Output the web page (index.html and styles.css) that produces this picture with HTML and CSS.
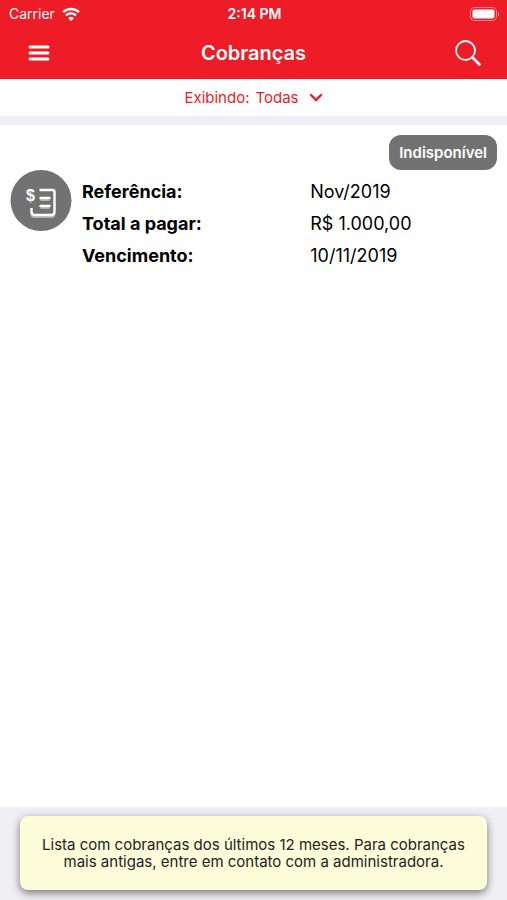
FILE: index.html
```html
<!DOCTYPE html>
<html lang="pt-BR">
  <head>
    <meta charset="utf-8">
    <meta name="viewport" content="width=device-width, initial-scale=1">
    <title>Cobranças</title>
    <link rel="stylesheet" href="styles.css">
  </head>
  <body>
    <header class="header">
      <div class="status-bar">
        <span class="carrier">
          Carrier
          <svg class="wifi" viewBox="0 0 18 14" fill="none" stroke="currentColor" stroke-width="2.4">
            <path d="M1 5.2a11.5 11.5 0 0 1 16 0" />
            <path d="M4 8.4a7.2 7.2 0 0 1 10 0" />
            <path d="M9 14L6.2 11.2a4 4 0 0 1 5.6 0z" fill="currentColor" stroke="none" />
          </svg>
        </span>
        <span class="clock">2:14 PM</span>
        <svg class="battery" viewBox="0 0 30 14">
          <rect x="0.5" y="0.5" width="26" height="13" rx="4" fill="none" stroke="#fff" stroke-opacity="0.45" />
          <rect x="2.5" y="2.5" width="22" height="9" rx="2" fill="#fff" />
          <path d="M28 5v4.5a3 3 0 0 0 0-4.5z" fill="#fff" fill-opacity="0.5" />
        </svg>
      </div>
      <nav class="nav-bar">
        <button class="icon-btn" type="button" aria-label="Menu">
          <svg class="menu-icon" viewBox="0 0 22 16" stroke="currentColor" stroke-width="3" stroke-linecap="round">
            <path d="M2 2h18M2 8h18M2 14h18" />
          </svg>
        </button>
        <h1>Cobranças</h1>
        <button class="icon-btn" type="button" aria-label="Buscar">
          <svg class="search-icon" viewBox="0 0 26 26" fill="none" stroke="currentColor" stroke-linecap="round">
            <circle cx="10.5" cy="10.5" r="9.5" stroke-width="1.8" />
            <path d="M17.5 17.5l7 7" stroke-width="2.6" />
          </svg>
        </button>
      </nav>
    </header>

    <div class="filter">
      <label for="filter-select">Exibindo:</label>
      <select id="filter-select">
        <option>Todas</option>
      </select>
      <svg class="chevron" viewBox="0 0 14 10" fill="none" stroke="currentColor" stroke-width="2.4" stroke-linecap="round">
        <path d="M2 2l5 5 5-5" />
      </svg>
    </div>

    <main class="list">
      <article class="bill">
        <span class="badge">Indisponível</span>
        <div class="bill-body">
          <svg class="bill-icon" viewBox="0 0 61 61">
            <circle cx="30.5" cy="30.5" r="30.5" fill="#727272" />
            <path d="M21 42v2a3 3 0 0 0 3 3h17a3 3 0 0 0 3-3" fill="none" stroke="#b0b0b0" stroke-width="2" />
            <path d="M29 20h13a2 2 0 0 1 2 2v20a3 3 0 0 1-3 3H24a3 3 0 0 1-3-3v-4" fill="none" stroke="#fff" stroke-width="2.4" />
            <path d="M30 30h9M30 38h9" stroke="#b0b0b0" stroke-width="2" />
            <path d="M30 28h9M30 36h9" stroke="#fff" stroke-width="2.4" stroke-linecap="round" />
            <text x="20" y="31" class="bill-icon-sign">$</text>
          </svg>
          <dl class="bill-data">
            <dt>Referência:</dt>
            <dd>Nov/2019</dd>
            <dt>Total a pagar:</dt>
            <dd>R$ 1.000,00</dd>
            <dt>Vencimento:</dt>
            <dd>10/11/2019</dd>
          </dl>
        </div>
      </article>
    </main>

    <footer class="footer">
      <p class="notice">
        Lista com cobranças dos últimos 12 meses. Para cobranças mais antigas,
        entre em contato com a administradora.
      </p>
    </footer>
  </body>
</html>
```
FILE: styles.css
```css
:root {
  --red: #ed1c26;
  --gray: #727272;
  --bg: #efeff4;
  --surface: #fff;
  --notice: #fdfdd9;
}

* {
  box-sizing: border-box;
}

body {
  display: flex;
  flex-direction: column;
  min-height: 100vh;
  margin: 0;
  background: var(--bg);
  color: #000;
  font-family: Inter, "Liberation Sans", sans-serif;
}

svg {
  display: block;
}

/* Header */
.header {
  background: var(--red);
  color: #fff;
}

.status-bar {
  display: grid;
  grid-template-columns: 1fr auto 1fr;
  align-items: center;
  height: 27px;
  padding: 0 7px 0 9px;
  font-size: 14px;
}

.carrier {
  display: flex;
  align-items: center;
  gap: 7px;
}

.wifi {
  width: 18px;
  height: 14px;
}

.clock {
  font-weight: 600;
}

.battery {
  justify-self: end;
  width: 30px;
  height: 14px;
}

.nav-bar {
  display: flex;
  align-items: center;
  justify-content: space-between;
  height: 52px;
  padding: 0 20px;
}

.nav-bar h1 {
  margin: 0;
  font-size: 20px;
  font-weight: 600;
}

.icon-btn {
  display: flex;
  align-items: center;
  justify-content: center;
  width: 38px;
  height: 44px;
  padding: 0;
  border: none;
  background: none;
  color: inherit;
  cursor: pointer;
}

.menu-icon {
  width: 22px;
  height: 16px;
}

.search-icon {
  width: 26px;
  height: 26px;
}

/* Filter */
.filter {
  display: flex;
  align-items: center;
  justify-content: center;
  gap: 6px;
  height: 37px;
  background: var(--surface);
  color: var(--red);
  font-size: 15px;
}

.filter select {
  appearance: none;
  field-sizing: content;
  padding: 0;
  border: none;
  background: none;
  color: inherit;
  font: inherit;
  cursor: pointer;
}

.chevron {
  width: 14px;
  height: 10px;
  margin-left: 4px;
  pointer-events: none;
}

/* Bills */
.list {
  flex: 1;
  margin-top: 9px;
  background: var(--surface);
}

.bill {
  display: flex;
  flex-direction: column;
  padding: 10px;
}

.badge {
  align-self: flex-end;
  padding: 8px 10px;
  border-radius: 12px;
  background: var(--gray);
  color: #fff;
  font-size: 15px;
  font-weight: 600;
  line-height: 19px;
}

.bill-body {
  display: flex;
  align-items: flex-start;
  gap: 10px;
}

.bill-icon {
  flex: none;
  width: 62px;
  height: 61px;
}

.bill-icon-sign {
  fill: #fff;
  font-family: "Liberation Sans", sans-serif;
  font-size: 16px;
  font-weight: 700;
  text-anchor: middle;
}

.bill-data {
  flex: 1;
  display: grid;
  grid-template-columns: 55fr 45fr;
  margin: 6px 0 0;
  font-size: 18px;
  line-height: 32px;
}

.bill-data dt {
  font-weight: 700;
}

.bill-data dd {
  margin: 0;
}

/* Footer */
.footer {
  padding: 9px 20px 10px;
}

.notice {
  margin: 0;
  padding: 20px;
  border-radius: 8px;
  background: var(--notice);
  box-shadow: 0 3px 8px rgba(0, 0, 0, 0.5);
  color: #222;
  font-size: 15px;
  line-height: 17px;
  text-align: center;
}
```
